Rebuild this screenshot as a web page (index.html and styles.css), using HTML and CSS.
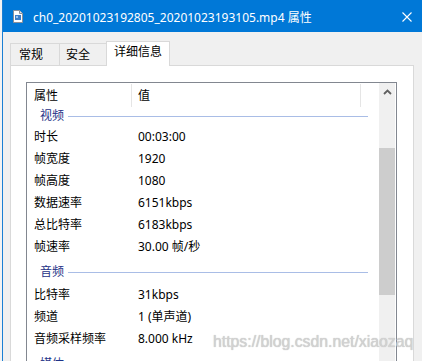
FILE: index.html
```html
<!DOCTYPE html>
<html lang="zh-CN">
<head>
  <meta charset="UTF-8" />
  <meta name="viewport" content="width=device-width, initial-scale=1.0" />
  <title>属性</title>
  <link rel="stylesheet" href="styles.css">
</head>
<body>
  <div class="window">
    <div class="titlebar">
      <svg class="file-icon" width="10" height="13" viewBox="0 0 10 13">
        <path d="M0.5 0.5 H6.5 L9.5 3.5 V12.5 H0.5 Z" fill="#fff" stroke="#8a8f99" />
        <path d="M6.5 0.5 V3.5 H9.5" fill="#e4e6ea" stroke="#8a8f99" />
        <rect x="2" y="5" width="6" height="5" fill="#3f7fc8" />
        <rect x="3" y="6" width="2" height="2" fill="#9cc3ef" />
      </svg>
      <div class="title">ch0_20201023192805_20201023193105.mp4 属性</div>
      <svg class="close" width="10" height="10" viewBox="0 0 10 10">
        <path d="M0.5 0.5 L9.5 9.5 M9.5 0.5 L0.5 9.5" stroke="#fff" stroke-width="1.1" />
      </svg>
    </div>

    <div class="tabs">
      <div class="tab tab-general">常规</div>
      <div class="tab tab-security">安全</div>
      <div class="tab active">详细信息</div>
    </div>

    <div class="panel">
      <div class="listview">
        <div class="list-main">
          <div class="list-header">
            <div class="col col-name">属性</div>
            <div class="col col-value">值</div>
            <div class="col col-rest"></div>
          </div>
          <div class="list-body">
            <div class="list-scroll" id="list"></div>
          </div>
        </div>
        <div class="scrollbar">
          <div class="scroll-btn">
            <svg width="9" height="6" viewBox="0 0 9 6">
              <path d="M1 5 L4.5 1.5 L8 5" fill="none" stroke="#606060" stroke-width="1.8" />
            </svg>
          </div>
          <div class="scroll-track">
            <div class="scroll-thumb"></div>
          </div>
        </div>
      </div>
    </div>

    <div class="watermark">https://blog.csdn.net/xiaozaq</div>
  </div>

  <script>
    const groups = [
      {
        name: "视频",
        rows: [
          ["时长", "00:03:00"],
          ["帧宽度", "1920"],
          ["帧高度", "1080"],
          ["数据速率", "6151kbps"],
          ["总比特率", "6183kbps"],
          ["帧速率", "30.00 帧/秒"]
        ]
      },
      {
        name: "音频",
        rows: [
          ["比特率", "31kbps"],
          ["频道", "1 (单声道)"],
          ["音频采样频率", "8.000 kHz"]
        ]
      },
      {
        name: "媒体",
        rows: []
      }
    ];

    const list = document.getElementById("list");

    groups.forEach((group, i) => {
      const head = document.createElement("div");
      head.className = i === 0 ? "group first" : "group";
      head.innerHTML = `<span class="group-name">${group.name}</span><span class="group-line"></span>`;
      list.appendChild(head);

      group.rows.forEach(([name, value]) => {
        const row = document.createElement("div");
        row.className = "row";
        row.innerHTML = `<div class="cell-name">${name}</div><div class="cell-value">${value}</div>`;
        list.appendChild(row);
      });
    });
  </script>
</body>
</html>
```

FILE: styles.css
```css
body {
  margin: 0;
  width: 422px;
  height: 361px;
  overflow: hidden;
  background-color: #f3f3f3;
  font-family: "Noto Sans", "Noto Sans CJK SC", sans-serif;
  font-size: 12px;
  color: #000;
}

.window {
  position: relative;
  margin-left: 2px;
  height: 361px;
  background-color: #f0f0f0;
  border-left: 1px solid #1a7fd4;
}

.titlebar {
  height: 32px;
  background-color: #0078d7;
  color: white;
  display: flex;
  align-items: center;
}

.file-icon {
  margin-left: 10px;
  margin-top: 1px;
}

.title {
  margin-left: 10px;
  margin-top: 1px;
  white-space: nowrap;
  flex: 1;
}

.close {
  margin-right: 10px;
  margin-top: 1px;
}

.tabs {
  display: flex;
  align-items: flex-end;
  margin-top: 9px;
  padding-left: 7px;
}

.tab {
  box-sizing: border-box;
  height: 22px;
  line-height: 21px;
  padding-left: 7px;
  border: 1px solid #d9d9d9;
  border-bottom: none;
  margin-right: -1px;
  background-color: #f0f0f0;
  white-space: nowrap;
}

.tab-general {
  width: 50px;
  padding-left: 8px;
}

.tab-security {
  width: 48px;
  padding-left: 6px;
}

.tab.active {
  position: relative;
  z-index: 1;
  width: 64px;
  height: 25px;
  line-height: 20px;
  margin-bottom: -1px;
  background-color: white;
}

.panel {
  margin: 0 8px 0 7px;
  height: 320px;
  background-color: white;
  border: 1px solid #d9d9d9;
}

.listview {
  display: flex;
  margin: 16px 16px 0 15px;
  height: 300px;
  border: 1px solid #828790;
}

.list-main {
  flex: 1;
  display: flex;
  flex-direction: column;
  min-width: 0;
}

.list-header {
  display: flex;
  height: 25px;
}

.col {
  box-sizing: border-box;
  height: 23px;
  margin-top: 1px;
  line-height: 23px;
  border-right: 1px solid #e5e5e5;
}

.col-name {
  width: 105px;
  padding-left: 7px;
}

.col-value {
  width: 229px;
  padding-left: 6px;
}

.col-rest {
  flex: 1;
  border-right: none;
}

.list-body {
  flex: 1;
  overflow: hidden;
}

.group {
  display: flex;
  align-items: center;
  height: 26px;
  padding: 2px 11px 0 13px;
  box-sizing: border-box;
  line-height: 16px;
}

.group.first {
  height: 18px;
  padding-top: 1px;
  padding-bottom: 3px;
  line-height: 14px;
}

.group-name {
  color: #1e3287;
}

.group-line {
  flex: 1;
  height: 1px;
  margin-left: 4px;
  background-color: #a9bde6;
}

.row {
  display: grid;
  grid-template-columns: 105px 1fr;
  height: 22px;
  line-height: 22px;
}

.cell-name {
  padding-left: 7px;
  white-space: nowrap;
}

.cell-value {
  padding-left: 6px;
  white-space: nowrap;
}

.scrollbar {
  width: 16px;
  margin-right: 1px;
  display: flex;
  flex-direction: column;
  background-color: #f0f0f0;
}

.scroll-btn {
  height: 17px;
  display: flex;
  justify-content: center;
  align-items: center;
}

.scroll-track {
  flex: 1;
}

.scroll-thumb {
  margin-top: 48px;
  height: 147px;
  background-color: #cdcdcd;
}

.watermark {
  position: absolute;
  left: 210px;
  top: 333px;
  font-family: "Liberation Sans", Arial, sans-serif;
  font-size: 15.8px;
  color: #d2d2d2;
  text-shadow: 0 0 1px #b8b8b8;
  white-space: nowrap;
}
```
